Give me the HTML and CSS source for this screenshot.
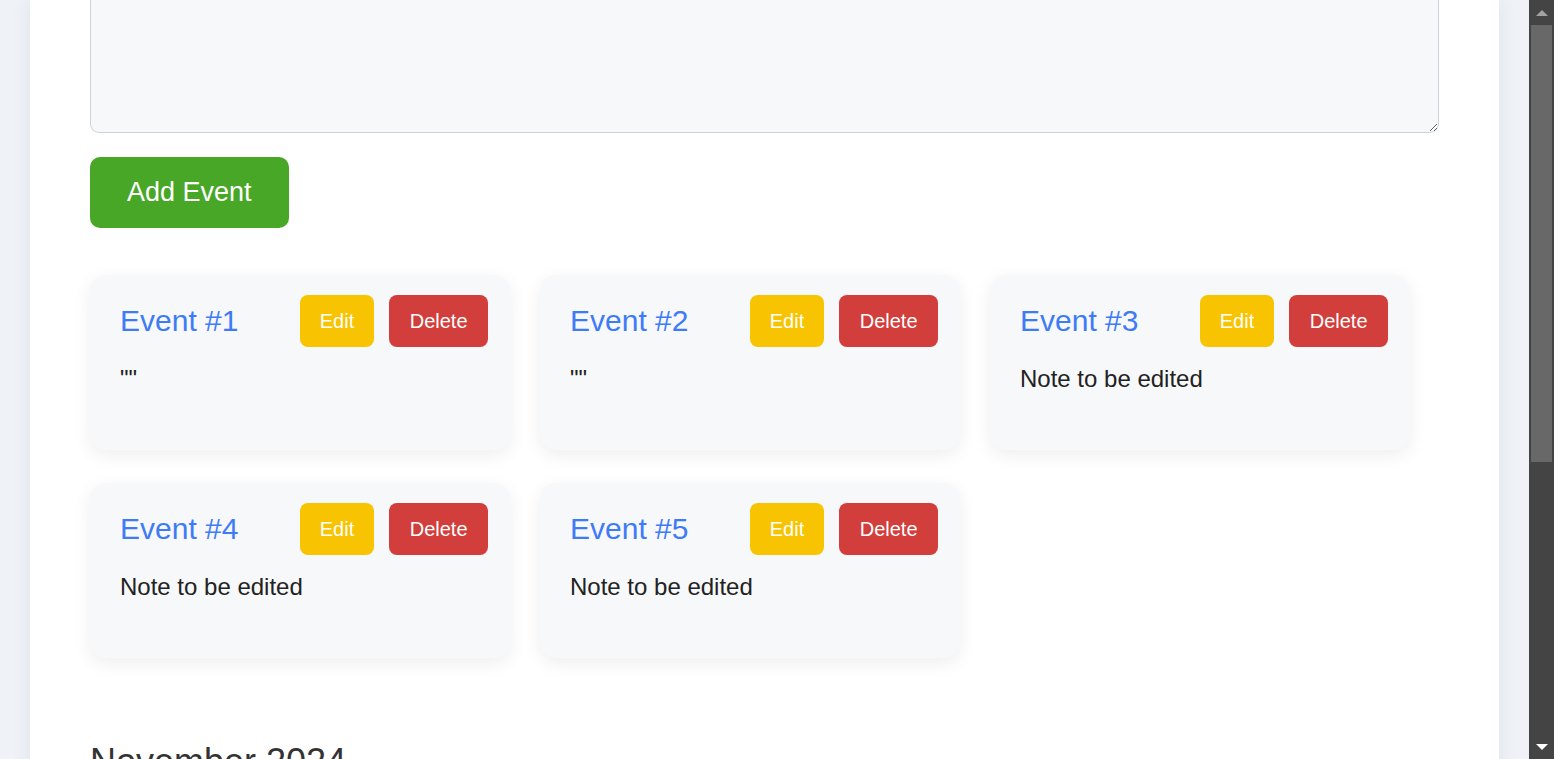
FILE: index.html
```html
<!DOCTYPE html>
<html lang="en">
<head>
<meta charset="utf-8">
<title>Events</title>
<link rel="stylesheet" href="styles.css">
</head>
<body>
<div class="viewport">
  <div class="page">
    <main class="container">
      <form class="event-form">
        <textarea class="note-input" aria-label="Event note"></textarea>
        <button type="button" class="add-btn">Add Event</button>
      </form>

      <section class="events">
        <article class="card">
          <div class="card-head">
            <h3 class="card-title">Event #1</h3>
            <div class="actions">
              <button type="button" class="btn btn-edit">Edit</button>
              <button type="button" class="btn btn-delete">Delete</button>
            </div>
          </div>
          <p class="card-note">""</p>
        </article>
        <article class="card">
          <div class="card-head">
            <h3 class="card-title">Event #2</h3>
            <div class="actions">
              <button type="button" class="btn btn-edit">Edit</button>
              <button type="button" class="btn btn-delete">Delete</button>
            </div>
          </div>
          <p class="card-note">""</p>
        </article>
        <article class="card">
          <div class="card-head">
            <h3 class="card-title">Event #3</h3>
            <div class="actions">
              <button type="button" class="btn btn-edit">Edit</button>
              <button type="button" class="btn btn-delete">Delete</button>
            </div>
          </div>
          <p class="card-note">Note to be edited</p>
        </article>
        <article class="card">
          <div class="card-head">
            <h3 class="card-title">Event #4</h3>
            <div class="actions">
              <button type="button" class="btn btn-edit">Edit</button>
              <button type="button" class="btn btn-delete">Delete</button>
            </div>
          </div>
          <p class="card-note">Note to be edited</p>
        </article>
        <article class="card">
          <div class="card-head">
            <h3 class="card-title">Event #5</h3>
            <div class="actions">
              <button type="button" class="btn btn-edit">Edit</button>
              <button type="button" class="btn btn-delete">Delete</button>
            </div>
          </div>
          <p class="card-note">Note to be edited</p>
        </article>
      </section>

      <section class="calendar">
        <h2 class="month">November 2024</h2>
      </section>
    </main>
  </div>

  <div class="scrollbar" aria-hidden="true">
    <div class="sb-btn">
      <svg width="12" height="6" viewBox="0 0 12 6"><polygon points="0,6 6,0 12,6" fill="#a3a3a3"/></svg>
    </div>
    <div class="sb-track">
      <div class="sb-thumb"></div>
    </div>
    <div class="sb-btn">
      <svg width="12" height="6" viewBox="0 0 12 6"><polygon points="0,0 12,0 6,6" fill="#ffffff"/></svg>
    </div>
  </div>
</div>
</body>
</html>
```

FILE: styles.css
```css
html,
body {
  height: 100%;
}

body {
  margin: 0;
  overflow: hidden;
  background: #eff3f8;
  font-family: "Liberation Sans", Arial, sans-serif;
  color: #222222;
}

.viewport {
  display: flex;
  height: 100vh;
}

.page {
  flex: 1;
  min-width: 0;
  overflow: hidden;
  padding: 0 30px;
}

.container {
  background: #ffffff;
  padding: 0 60px 60px;
  min-height: 100%;
  box-shadow: 0 0 18px rgba(30, 50, 80, 0.08);
}

/* scrollbar */
.scrollbar {
  flex: 0 0 25px;
  display: flex;
  flex-direction: column;
  background: #444444;
}

.sb-btn {
  flex: 0 0 25px;
  display: flex;
  align-items: center;
  justify-content: center;
  padding-left: 1px;
}

.sb-track {
  flex: 1;
  display: flex;
  flex-direction: column;
  padding: 0 2px;
}

.sb-thumb {
  height: 437px;
  background: #686868;
}

/* form */
.event-form {
  display: flex;
  flex-direction: column;
  align-items: flex-start;
}

.note-input {
  display: block;
  box-sizing: border-box;
  width: 100%;
  height: 133px;
  margin: 0;
  background: #f7f8fa;
  border: 1px solid #cdd3dc;
  border-top: none;
  border-radius: 0 0 9px 9px;
  font-family: inherit;
  font-size: 20px;
  resize: vertical;
}

.add-btn {
  margin-top: 24px;
  height: 71px;
  padding: 0 37px;
  background: #48a726;
  color: #ffffff;
  border: none;
  border-radius: 10px;
  font-family: inherit;
  font-size: 27px;
}

/* event cards */
.events {
  margin-top: 47px;
  display: flex;
  flex-wrap: wrap;
  column-gap: 30px;
  row-gap: 33px;
}

.card {
  box-sizing: border-box;
  width: 420px;
  padding: 20px 22px 57px 30px;
  background: #f7f8fa;
  border-radius: 16px;
  box-shadow: 0 5px 18px rgba(0, 0, 0, 0.07);
}

.card-head {
  display: flex;
  align-items: center;
  justify-content: space-between;
}

.card-title {
  margin: 0;
  font-size: 30px;
  font-weight: normal;
  color: #3f7bf6;
}

.actions {
  display: flex;
  gap: 15px;
}

.btn {
  height: 52px;
  padding: 0 20px;
  border: none;
  border-radius: 8px;
  color: #ffffff;
  font-family: inherit;
  font-size: 20px;
}

.btn-edit {
  background: #f8c300;
}

.btn-delete {
  padding: 0 20.5px;
  background: #d23e3b;
}

.card-note {
  margin: 18px 0 0;
  font-size: 24px;
  line-height: 28px;
  color: #222222;
}

/* calendar */
.calendar {
  margin-top: 83px;
}

.month {
  margin: 0;
  font-size: 36px;
  font-weight: normal;
  color: #333333;
}
```
